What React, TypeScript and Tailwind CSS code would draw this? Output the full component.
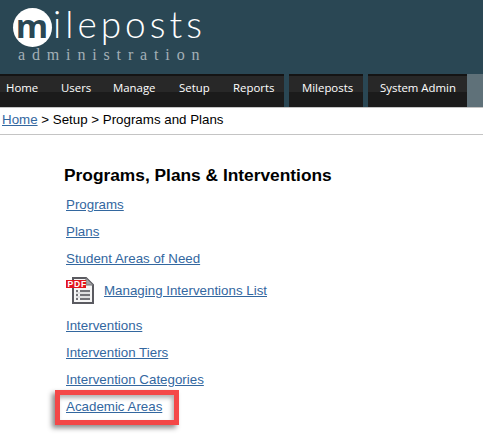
const navMain = [
  { label: "Home", w: "w-[49px]", pl: "pl-[6px]" },
  { label: "Users", w: "w-[52px]", pl: "pl-[12px]" },
  { label: "Manage", w: "w-[66px]", pl: "pl-[12px]" },
  { label: "Setup", w: "w-[54px]", pl: "pl-[12px]" },
  { label: "Reports", w: "w-[63px]", pl: "pl-[12px]" },
];

const topLinks = ["Programs", "Plans", "Student Areas of Need"];
const bottomLinks = ["Interventions", "Intervention Tiers", "Intervention Categories"];

function NavTab({ label, className }: { label: string; className: string }) {
  return (
    <div className={`relative h-[33px] border-t-2 border-[#141414] bg-[#1b1b1b] ${className}`}>
      <div className="absolute inset-x-0 top-0 h-[16px] bg-[#282828]" />
      <span className="relative block pt-[3px] font-['Open_Sans',sans-serif] text-[11.4px] leading-[18px] text-white whitespace-nowrap">{label}</span>
    </div>
  );
}

function PdfIcon() {
  return (
    <svg width="28" height="27" viewBox="0 0 28 27" className="shrink-0">
      <path d="M7 1H20L27 8V26H7Z" fill="#f6f6f6" stroke="#5a5a60" strokeWidth="2" />
      <path d="M20 1V8H27Z" fill="#a4a4a8" stroke="#77777a" />
      <rect x="0" y="3" width="20" height="8" fill="#e3151c" />
      <text x="1.5" y="10.2" fontSize="8.5" fontWeight="700" fill="#ffffff" fontFamily="'Liberation Sans', sans-serif" letterSpacing="0.8">PDF</text>
      <path d="M10 14H12M14 14H24M10 18H12M14 18H24M10 22H12M14 22H24" stroke="#4a4a50" strokeWidth="1.5" />
      <path d="M10 16H24M10 20H24" stroke="#c9c9cc" strokeWidth="1" />
    </svg>
  );
}

function DocLink({ label }: { label: string }) {
  return (
    <a href="#" className="block text-[13.33px] leading-[16px] text-[#33679f] underline whitespace-nowrap">
      {label}
    </a>
  );
}

export default function App() {
  return (
    <div className="h-[434px] w-[483px] overflow-hidden bg-white font-['Liberation_Sans',Arial,sans-serif]">
      <header className="h-[74px] bg-[#2a4754] pl-[13px] pt-[8px]">
        <div className="flex items-center">
          <div className="flex h-[39px] w-[39px] shrink-0 items-center justify-center rounded-full bg-white">
            <span className="font-['Open_Sans',sans-serif] text-[33px] font-bold leading-[32px] tracking-[-1px] text-[#2a4754] -mt-[3px] -ml-[2px]">m</span>
          </div>
          <span className="ml-[1px] font-['Lato',sans-serif] text-[37px] font-light leading-[38px] tracking-[4px] text-white -mt-[8px]">
            ileposts
          </span>
        </div>
        <div className="ml-[5px] font-['Liberation_Serif',serif] text-[16px] leading-[15px] tracking-[6.85px] text-[#a3b0b6]">
          administration
        </div>
      </header>

      <nav className="flex h-[33px] bg-[#2a4754]">
        <div className="flex">
          {navMain.map((item) => (
            <NavTab key={item.label} label={item.label} className={`${item.w} ${item.pl}`} />
          ))}
        </div>
        <NavTab label="Mileposts" className="ml-[5px] w-[74px] pl-[13px]" />
        <NavTab label="System Admin" className="ml-[5px] w-[99px] pl-[12px]" />
        <div className="w-[16px] bg-[#5f7179]" />
      </nav>

      <div className="h-[28px] border-y-[1px] border-[#c4c4c4] pl-[2px] pt-[4px] text-[13.33px] leading-[16px] text-black">
        <a href="#" className="text-[#33679f] underline">Home</a> &gt; Setup &gt; Programs and Plans
      </div>

      <main className="pl-[64px] pt-[30px]">
        <h1 className="text-[17.33px] font-bold leading-[20px] text-black">Programs, Plans &amp; Interventions</h1>
        <div className="mt-[12px] flex flex-col gap-[11px] pl-[2px]">
          {topLinks.map((l) => <DocLink key={l} label={l} />)}
        </div>
        <div className="mt-[10px] flex items-center gap-[10px] pl-[2px]">
          <PdfIcon />
          <DocLink label="Managing Interventions List" />
        </div>
        <div className="mt-[14px] flex flex-col gap-[11px] pl-[2px]">
          {bottomLinks.map((l) => <DocLink key={l} label={l} />)}
          <div className="relative">
            <DocLink label="Academic Areas" />
            <div className="absolute -left-[11px] -top-[9px] h-[35px] w-[124px] border-[5px] border-[#f44848] shadow-[-3px_3px_5px_rgba(0,0,0,0.45),inset_-2px_3px_4px_rgba(0,0,0,0.3)]" />
          </div>
        </div>
      </main>
    </div>
  );
}
